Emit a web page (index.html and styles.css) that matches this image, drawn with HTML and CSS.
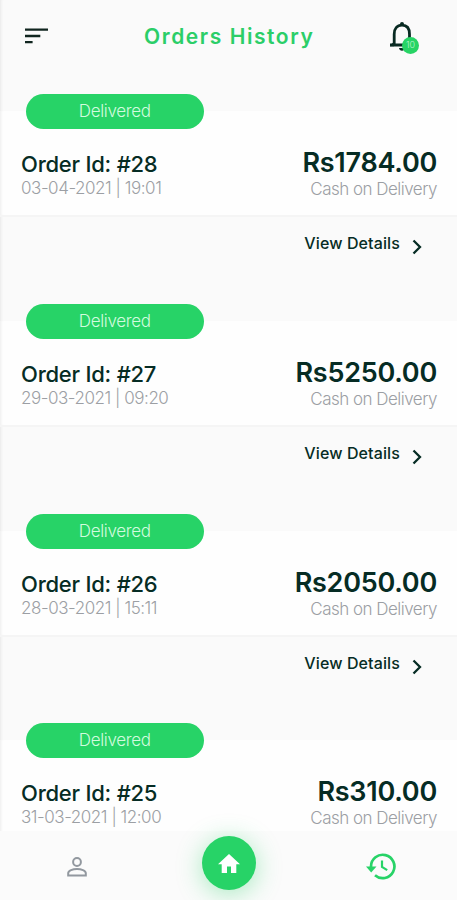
FILE: index.html
```html
<!DOCTYPE html>
<html lang="en">
<head>
<meta charset="utf-8">
<title>Orders History</title>
<link rel="stylesheet" href="styles.css">
</head>
<body>
<div class="app">
  <header class="header">
    <svg class="menu" viewBox="0 0 24 16"><path d="M0 1.6h23M0 8h15.3M0 14.1h7.6"/></svg>
    <h1>Orders History</h1>
    <div class="bell">
      <svg viewBox="0 0 27 31"><path class="line" d="M5.2 23.5V13.2C5.2 7.8 8 4.2 13 4.2s7.5 3.6 7.5 9v10.3M1 24h24"/><path class="solid" d="M11 4.5V3a2 2 0 0 1 4 0v1.5zM1 25.3v-1.4l4-3v4.4zM10 27h6q-.5 2.8-3 2.8T10 27z"/></svg>
      <span class="badge">10</span>
    </div>
  </header>
  <main>
    <article class="order">
      <span class="status">Delivered</span>
      <div class="card">
        <div><h2>Order Id: #28</h2><p class="date">03-04-2021 | 19:01</p></div>
        <div class="total"><strong>Rs1784.00</strong><p>Cash on Delivery</p></div>
      </div>
      <a class="details"><span>View Details</span><svg viewBox="0 0 10 16"><path d="M1.5 1.5 8 8l-6.500 6.500"/></svg></a>
    </article>
    <article class="order">
      <span class="status">Delivered</span>
      <div class="card">
        <div><h2>Order Id: #27</h2><p class="date">29-03-2021 | 09:20</p></div>
        <div class="total"><strong>Rs5250.00</strong><p>Cash on Delivery</p></div>
      </div>
      <a class="details"><span>View Details</span><svg viewBox="0 0 10 16"><path d="M1.5 1.5 8 8l-6.500 6.500"/></svg></a>
    </article>
    <article class="order">
      <span class="status">Delivered</span>
      <div class="card">
        <div><h2>Order Id: #26</h2><p class="date">28-03-2021 | 15:11</p></div>
        <div class="total"><strong>Rs2050.00</strong><p>Cash on Delivery</p></div>
      </div>
      <a class="details"><span>View Details</span><svg viewBox="0 0 10 16"><path d="M1.5 1.5 8 8l-6.500 6.500"/></svg></a>
    </article>
    <article class="order last">
      <span class="status">Delivered</span>
      <div class="card">
        <div><h2>Order Id: #25</h2><p class="date">31-03-2021 | 12:00</p></div>
        <div class="total"><strong>Rs310.00</strong><p>Cash on Delivery</p></div>
      </div>
    </article>
  </main>
  <nav class="nav">
    <svg class="user" viewBox="0 0 20 20"><circle cx="10" cy="5" r="3.9"/><path d="M1.200 18.600v-2.400c0-2.600 4.600-4.200 8.800-4.200s8.800 1.600 8.800 4.200v2.400z"/></svg>
    <span class="home"><svg viewBox="0 0 24 24"><path d="M10 22v-6.500h4V22h5.300v-8.700H23L12 3 1 13.300h3.700V22z"/></svg></span>
    <svg class="history" viewBox="0 0 30 27"><path class="ring" d="M5 14.500v-1a11.700 11.700 0 1 1 4 8.800"/><path class="arrow" d="M0 13.500h10.500L5.200 19.500z"/><path class="hand" d="M16 7.500V14l5.200 3.100"/></svg>
  </nav>
</div>
</body>
</html>
```
FILE: styles.css
```css
* { box-sizing: border-box; }
body { margin: 0; font-family: Inter, "Liberation Sans", sans-serif; color: #062c24; }
h1, h2, p { margin: 0; white-space: nowrap; }
svg { display: block; flex: none; fill: none; }
.app { width: 457px; height: 900px; overflow: hidden; display: flex; flex-direction: column; background: #fafafa; box-shadow: inset 3px 0 3px -2px #e8e8e8; }
.header { height: 111px; flex: none; display: flex; align-items: flex-start; padding: 21px 37px 0 25px; }
.menu { width: 24px; height: 16px; margin-top: 7px; stroke: #10251f; stroke-width: 2.4; }
h1 { margin: 1px 0 0 95px; font-size: 21px; line-height: 30px; font-weight: 600; letter-spacing: 1.57px; color: #2bce68; }
.bell { position: relative; width: 31px; height: 33px; margin-left: auto; }
.bell svg { width: 27px; height: 31px; }
.bell .line { stroke: #082a22; stroke-width: 2.8; }
.bell .solid { fill: #082a22; }
.badge { position: absolute; left: 13px; top: 16px; width: 17px; height: 17px; border-radius: 50%; background: #27d465; color: #b9f5cf; font-size: 9px; line-height: 16px; text-align: center; font-weight: 300; }
.order { position: relative; height: 209.8px; }
.order.last { height: 120px; }
.status { position: absolute; left: 26px; top: -17px; width: 177.500px; height: 35px; border-radius: 18px; background: #27d367; color: #d2fbdf; font-size: 17px; line-height: 34px; font-weight: 300; letter-spacing: -.35px; text-align: center; }
.card { height: 106px; padding: 38px 20px 0 21px; display: flex; justify-content: space-between; background: #fefefe; border-bottom: 2px solid #f5f5f5; box-shadow: inset 3px 0 3px -2px #ededed; }
h2 { font-size: 22px; line-height: 30px; font-weight: 500; letter-spacing: -.23px; }
p { font-size: 17px; line-height: 20px; font-weight: 300; color: #9c9fa4; }
.date { margin-top: -1px; letter-spacing: -.46px; }
.total { text-align: right; }
.total strong { display: block; font-size: 27px; line-height: 30px; font-weight: 600; letter-spacing: -.25px; margin-top: -1px; }
.total p { margin-top: 1px; letter-spacing: -.52px; }
.details { display: flex; justify-content: flex-end; padding: 16px 35px 0 0; font-size: 16px; line-height: 20px; font-weight: 500; letter-spacing: .12px; }
.details svg { width: 10px; height: 16px; margin: 6px 0 0 12px; stroke: #062c24; stroke-width: 2.3; }
.nav { position: relative; height: 69px; flex: none; display: flex; align-items: flex-start; justify-content: space-between; padding: 0 61px 0 67px; background: #fbfbfb; }
main { height: 720px; flex: none; overflow: visible; }
.user { width: 20px; height: 20px; margin-top: 26px; stroke: #92989f; stroke-width: 2; }
.home { width: 54px; height: 54px; margin: 5px 0 0 5px; padding: 15px; border-radius: 50%; background: #27d367; box-shadow: 0 4px 26px #27d36766; }
.home svg { width: 24px; height: 24px; fill: #fff; }
.history { width: 30px; height: 27px; margin-top: 22px; stroke: #27d367; stroke-width: 2.7; }
.history .arrow { fill: #27d367; stroke: none; }
.history .hand { stroke-width: 2.2; }
```
